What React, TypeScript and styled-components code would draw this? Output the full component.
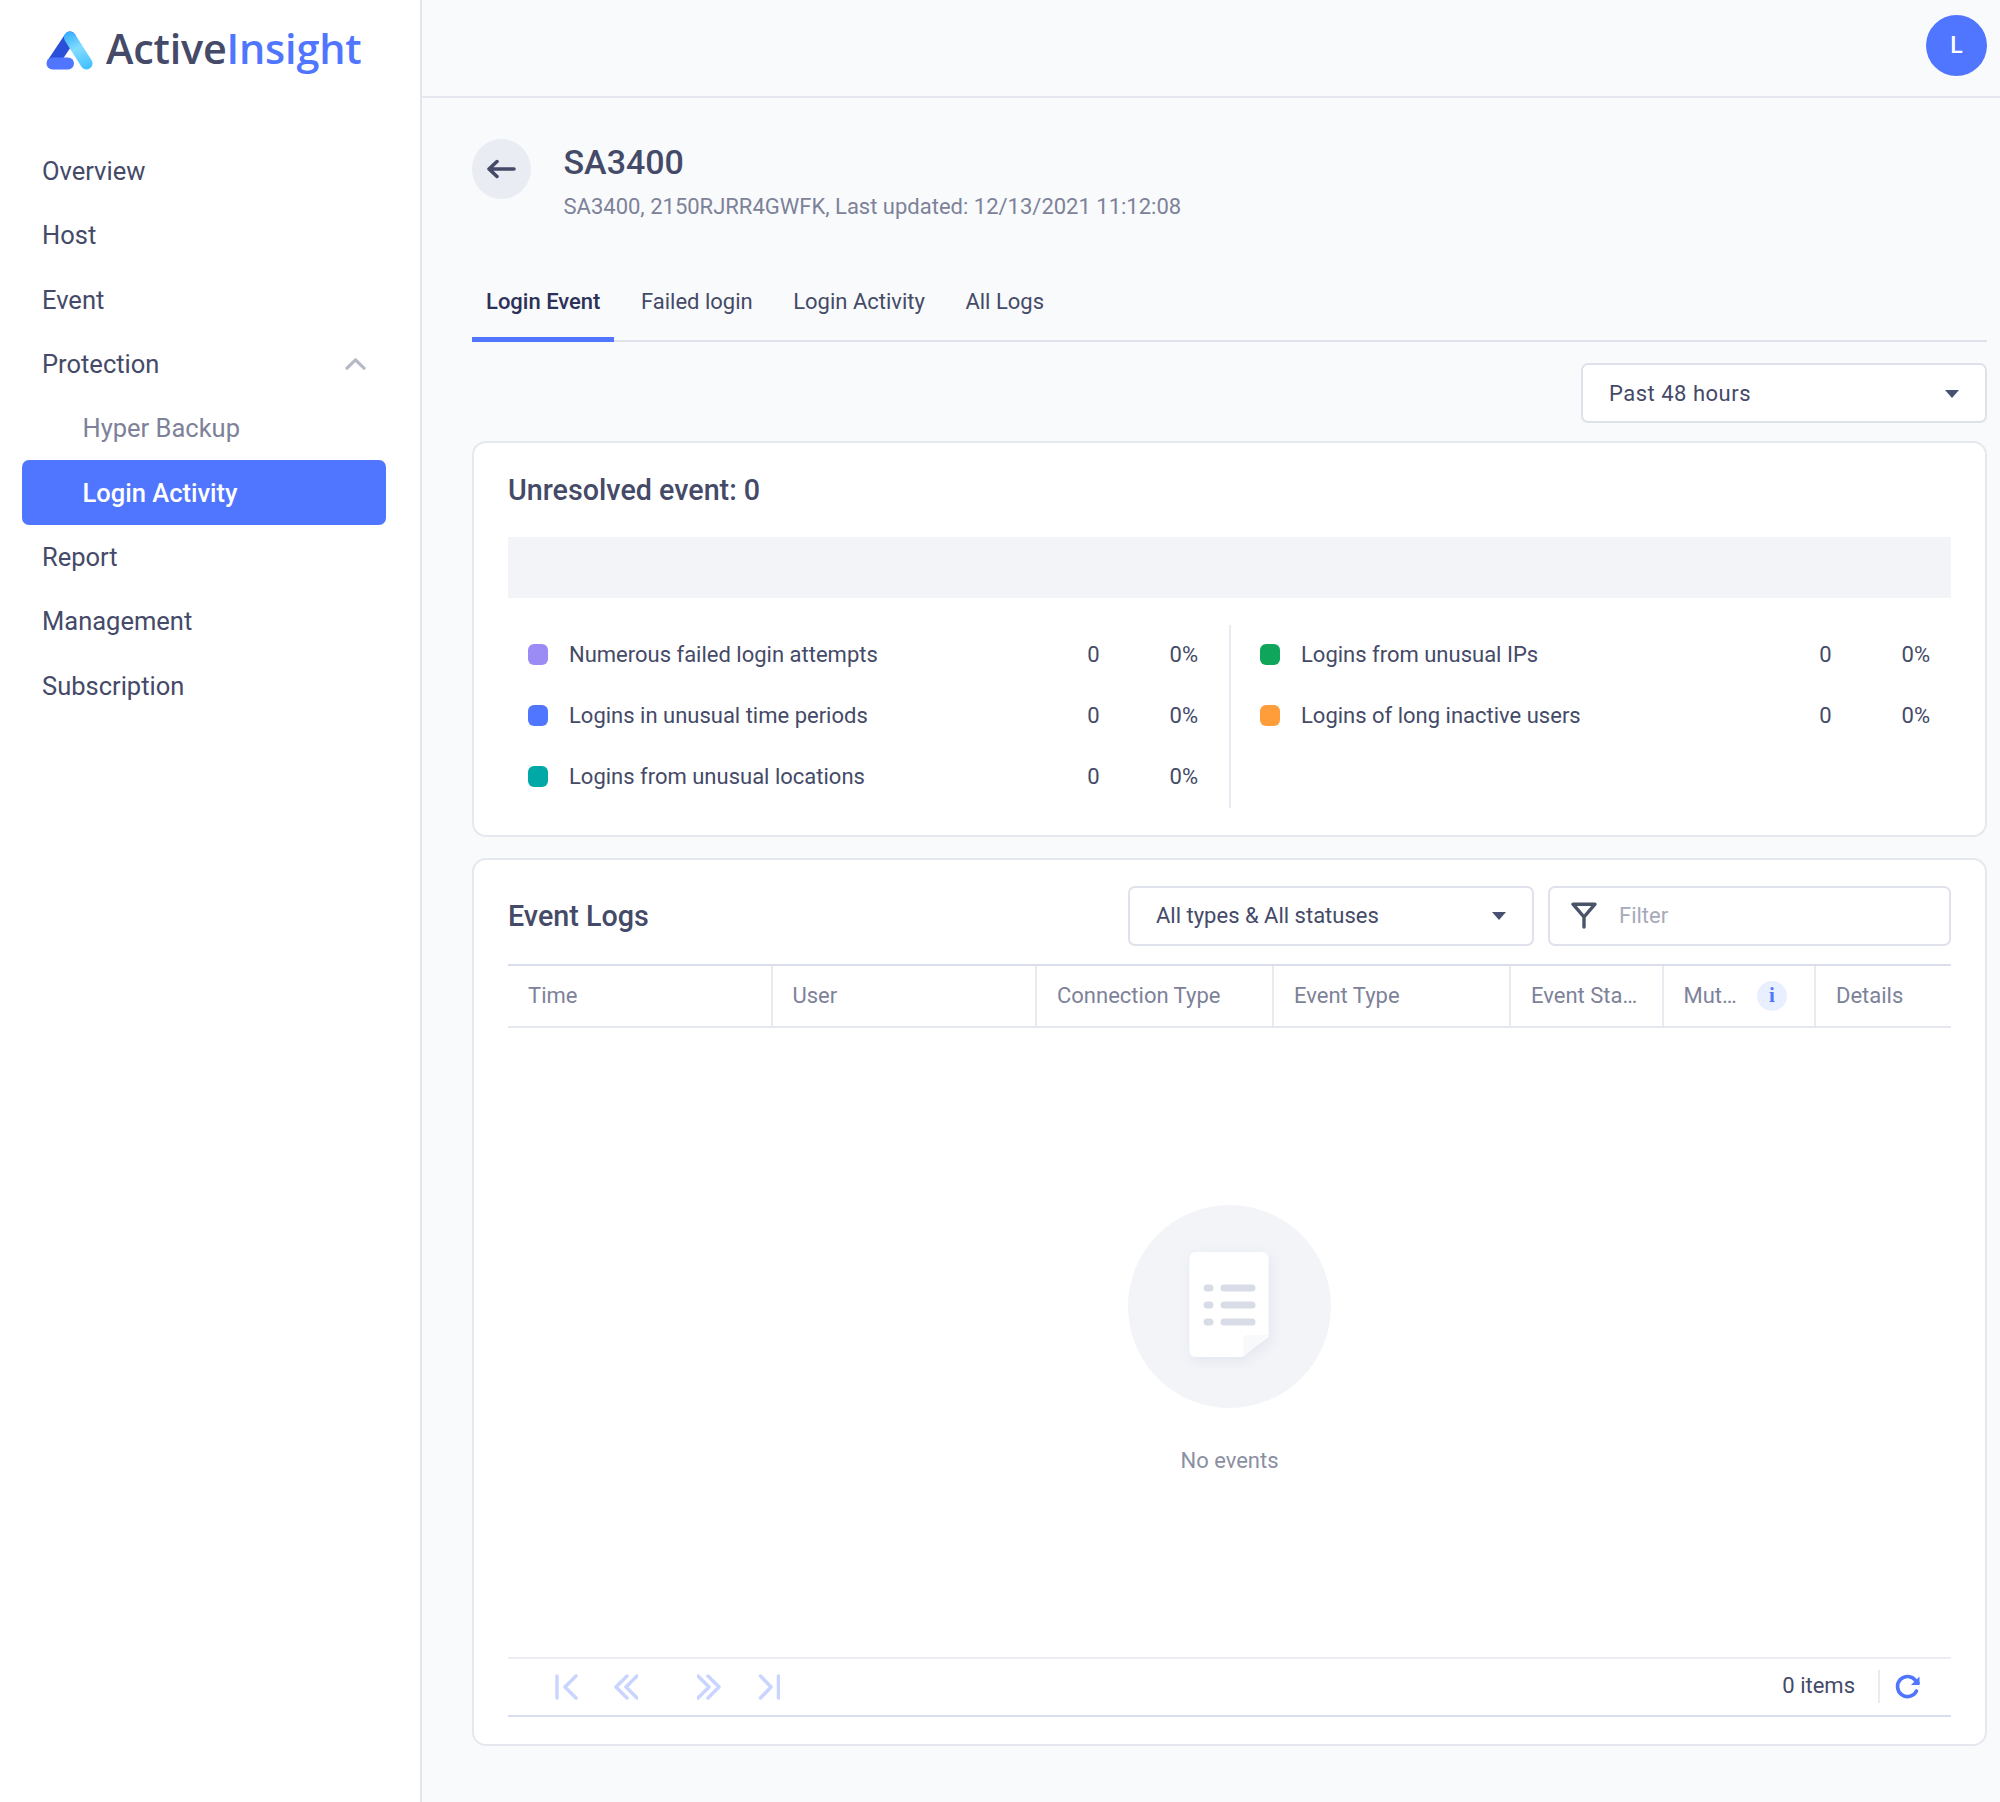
import React from "react";
import styled, { createGlobalStyle } from "styled-components";

const Global = createGlobalStyle`
  html, body { margin: 0; padding: 0; background: #f9fafc; }
  * { box-sizing: border-box; }
  body { font-family: Roboto, "Liberation Sans", sans-serif; color: #444a67; }
`;

const Page = styled.div`
  display: flex;
  width: 2000px;
  height: 1802px;
  background: #f9fafc;
`;
const Sidebar = styled.aside`
  width: 422px;
  flex: none;
  background: #fff;
  border-right: 2px solid #e2e5ee;
  padding: 0 34px 0 22px;
`;
const Brand = styled.div`
  height: 139px;
  padding: 28px 0 0 24px;
  display: flex;
  align-items: flex-start;
  gap: 12px;
`;
const BrandText = styled.div`
  font-family: "Open Sans", sans-serif;
  font-weight: 600;
  font-size: 41.4px;
  line-height: 40px;
  color: #444a67;
  letter-spacing: -0.2px;
  span { color: #5076ff; }
`;
const NavItem = styled.div<{ $level?: number; $active?: boolean }>`
  height: 64.3px;
  display: flex;
  align-items: center;
  justify-content: space-between;
  padding: 0 20px 0 ${(p) => (p.$level ? 60.5 : 20)}px;
  font-size: 25.5px;
  font-weight: ${(p) => (p.$active ? 500 : 400)};
  border-radius: 7px;
  color: ${(p) => (p.$active ? "#fff" : p.$level ? "#7d8299" : "#444a67")};
  background: ${(p) => (p.$active ? "#5076ff" : "transparent")};
`;
const Main = styled.main`
  flex: 1;
  min-width: 0;
`;
const TopBar = styled.header`
  height: 98px;
  border-bottom: 2px solid #e6e8ef;
  padding: 15px 13px 0 0;
  display: flex;
  justify-content: flex-end;
`;
const Avatar = styled.div`
  width: 61px;
  height: 61px;
  border-radius: 50%;
  background: #5076ff;
  color: #fff;
  font-size: 23px;
  font-weight: 500;
  display: flex;
  align-items: center;
  justify-content: center;
`;
const Content = styled.div`
  padding: 41px 13px 0 50px;
`;
const Head = styled.div`
  display: flex;
  gap: 32.5px;
  height: 93px;
`;
const BackButton = styled.div`
  width: 59px;
  height: 60px;
  border-radius: 50%;
  background: #e9ecf3;
  display: flex;
  align-items: center;
  justify-content: center;
  padding-right: 1px;
`;
const HeadText = styled.div`
  display: flex;
  flex-direction: column;
`;
const Title = styled.h1`
  margin: 0;
  font-size: 34px;
  font-weight: 500;
  line-height: 46px;
  color: #444a67;
`;
const Sub = styled.div`
  margin-top: 6.5px;
  font-size: 22px;
  line-height: 30px;
  color: #7d8299;
`;
const Tabs = styled.nav`
  margin-top: 42px;
  height: 67.5px;
  display: flex;
  gap: 12.5px;
  border-bottom: 2px solid #dfe2ea;
`;
const Tab = styled.div<{ $active?: boolean }>`
  height: 67.5px;
  padding: 0 14px ${(p) => (p.$active ? 7.5 : 12.5)}px;
  display: flex;
  align-items: center;
  font-size: 22px;
  font-weight: ${(p) => (p.$active ? 500 : 400)};
  color: ${(p) => (p.$active ? "#2c3157" : "#444a67")};
  border-bottom: ${(p) => (p.$active ? "5px solid #5076ff" : "none")};
`;
const RangeRow = styled.div`
  display: flex;
  justify-content: flex-end;
  margin-top: 21px;
`;
const Select = styled.div<{ $spaced?: boolean }>`
  width: 406px;
  height: 60px;
  flex: none;
  background: #fff;
  border: 2px solid #dfe2ea;
  border-radius: 7px;
  padding: ${(p) => (p.$spaced ? "2px 26px 0" : "0 26px")};
  display: flex;
  align-items: center;
  justify-content: space-between;
  font-size: 22px;
  letter-spacing: ${(p) => (p.$spaced ? "0.5px" : "0")};
  color: #444a67;
`;
const Caret = styled.span`
  width: 0;
  height: 0;
  border-left: 7px solid transparent;
  border-right: 7px solid transparent;
  border-top: 8px solid #4a5070;
`;
const Card = styled.section<{ $height: number; $top: number }>`
  margin-top: ${(p) => p.$top}px;
  height: ${(p) => p.$height}px;
  background: #fff;
  border: 2px solid #e6e8ef;
  border-radius: 14px;
  padding: 0 34px;
`;
const CardTitle = styled.h2`
  margin: 0;
  font-size: 28.7px;
  font-weight: 500;
  color: #444a67;
`;
const SummaryHead = styled.div`
  height: 94px;
  display: flex;
  align-items: center;
`;
const EmptyBar = styled.div`
  height: 61px;
  background: #f2f4f8;
`;
const Legend = styled.div`
  margin-top: 27px;
  height: 182px;
  display: grid;
  grid-template-columns: 721px 1fr;
`;
const LegendColumn = styled.div<{ $divider?: boolean }>`
  padding: 0 ${(p) => (p.$divider ? "21px 0 29px" : "31px 0 20px")};
  border-left: ${(p) => (p.$divider ? "2px solid #e9ebf1" : "none")};
`;
const LegendRow = styled.div`
  height: 61px;
  padding-bottom: 1px;
  display: grid;
  grid-template-columns: 20px 21px 1fr 60px 98.5px;
  align-items: center;
  font-size: 22px;
  color: #444a67;
`;
const Swatch = styled.span<{ $color: string }>`
  width: 20px;
  height: 21px;
  border-radius: 6px;
  background: ${(p) => p.$color};
`;
const LegendLabel = styled.span`
  grid-column: 3;
`;
const LegendNum = styled.span`
  text-align: right;
`;
const LogHead = styled.div`
  height: 104px;
  padding-top: 26px;
  display: flex;
  align-items: flex-start;
`;
const LogTitle = styled(CardTitle)`
  flex: 1;
  line-height: 60px;
`;
const FilterBox = styled.div`
  width: 403px;
  height: 60px;
  margin-left: 14px;
  background: #fff;
  border: 2px solid #dfe2ea;
  border-radius: 7px;
  padding-left: 21px;
  display: flex;
  align-items: center;
  gap: 22px;
  font-size: 22px;
  color: #a6aab9;
`;
const HeaderRow = styled.div`
  height: 64px;
  display: grid;
  grid-template-columns: 264.5px 264.5px 237px 237px 152.5px 152.5px 1fr;
  border-top: 2px solid #d9ddee;
  border-bottom: 2px solid #e6e8ef;
`;
const HeaderCell = styled.div<{ $last?: boolean; $badge?: boolean }>`
  padding: 0 ${(p) => (p.$badge ? 27 : 20)}px 0 20px;
  display: flex;
  align-items: center;
  justify-content: space-between;
  font-size: 22px;
  color: #7d8299;
  border-right: ${(p) => (p.$last ? "none" : "2px solid #e9ebf1")};
  white-space: nowrap;
`;
const InfoBadge = styled.span`
  width: 30px;
  height: 30px;
  border-radius: 50%;
  background: #e8efff;
  color: #5076ff;
  font-family: "Liberation Serif", serif;
  font-weight: 700;
  font-size: 21px;
  display: flex;
  align-items: center;
  justify-content: center;
`;
const EmptyArea = styled.div`
  height: 629px;
  padding-top: 177px;
  display: flex;
  flex-direction: column;
  align-items: center;
`;
const EmptyCircle = styled.div`
  width: 203px;
  height: 203px;
  border-radius: 50%;
  background: #f2f4f8;
  display: flex;
  align-items: center;
  justify-content: center;
`;
const EmptyText = styled.div`
  margin-top: 38px;
  font-size: 22px;
  line-height: 30px;
  color: #8b8fa3;
`;
const Pager = styled.div`
  height: 60px;
  border-top: 2px solid #eceef4;
  border-bottom: 2px solid #d9ddee;
  display: flex;
  align-items: center;
  padding: 0 30px 0 47px;
`;
const PagerIcons = styled.div`
  display: flex;
  align-items: center;
  gap: 35px;
  flex: 1;
`;
const PagerButton = styled.span<{ $gap?: number }>`
  display: flex;
  margin-left: ${(p) => p.$gap || 0}px;
`;
const Items = styled.div`
  font-size: 22px;
  color: #444a67;
  padding-right: 23px;
  border-right: 2px solid #e9ebf1;
  height: 33px;
  line-height: 31px;
  margin-right: 15px;
`;

const Logo = () => (
  <svg width="48" height="42" viewBox="0 0 48 42" fill="none" style={{ marginTop: 2 }}>
    <defs>
      <linearGradient id="arm" x1="24" y1="2" x2="41" y2="38" gradientUnits="userSpaceOnUse">
        <stop offset="0" stopColor="#38b0ff" />
        <stop offset="0.45" stopColor="#82dcff" />
        <stop offset="1" stopColor="#45c1ff" />
      </linearGradient>
    </defs>
    <path d="M24 7.5 L7 33" stroke="#2a4fd8" strokeWidth="12" strokeLinecap="round" />
    <path d="M24 7.5 L40.5 33.5" stroke="url(#arm)" strokeWidth="12" strokeLinecap="round" />
    <rect x="0.5" y="27.5" width="27.5" height="12" rx="6" fill="#5076ff" />
  </svg>
);
const Chevron = () => (
  <svg width="22" height="13" viewBox="0 0 22 13" fill="none">
    <path d="M3 10.2 L11.5 1.8 L20 10.2" stroke="#b6b9c6" strokeWidth="3.2" strokeLinecap="round" strokeLinejoin="round" />
  </svg>
);
const BackArrow = () => (
  <svg width="30" height="20" viewBox="0 0 30 20" fill="none">
    <path d="M11 2.5 L3 10 L11 17.5 M3 10 H28" stroke="#444a67" strokeWidth="3.5" strokeLinecap="round" strokeLinejoin="round" />
  </svg>
);
const Funnel = () => (
  <svg width="26" height="27" viewBox="0 0 26 27" fill="none">
    <path d="M2 2.2 H24 L13 15 Z M13 15 V25" stroke="#4a5468" strokeWidth="3.4" strokeLinecap="round" strokeLinejoin="round" />
  </svg>
);
const DocIcon = () => (
  <svg width="100" height="124" viewBox="0 0 100 124" fill="none">
    <defs>
      <filter id="doc" x="-30%" y="-30%" width="160%" height="160%">
        <feDropShadow dx="2" dy="4" stdDeviation="7" floodColor="#c5cadb" floodOpacity="0.35" />
      </filter>
    </defs>
    <g transform="translate(-4.5 3)">
      <path d="M14 11 a6 6 0 0 1 6 -6 H87 a6 6 0 0 1 6 6 V90 L66 110 H20 a6 6 0 0 1 -6 -6 Z" fill="#fff" filter="url(#doc)" />
      <path d="M68 110 V92 a4 4 0 0 1 4 -4 H93 Z" fill="#f8f9fb" />
      {[41, 58, 75].map((y) => (
        <g key={y} fill="#d8dce6">
          <rect x="28" y={y - 3.5} width="10" height="7" rx="3.5" />
          <rect x="45" y={y - 3.5} width="35" height="7" rx="3.5" />
        </g>
      ))}
    </g>
  </svg>
);
const PagerIcon = ({ d }: { d: string }) => (
  <svg width="24" height="26" viewBox="0 0 24 26" fill="none">
    <path d={d} stroke="#cad5ff" strokeWidth="3.5" strokeLinecap="round" strokeLinejoin="round" />
  </svg>
);
const Refresh = () => (
  <svg width="26" height="26" viewBox="0 0 26 26" fill="none">
    <path d="M21.5 17 A10 10 0 1 1 20.5 6.5 L23 9" stroke="#5076ff" strokeWidth="3.6" strokeLinecap="round" fill="none" />
    <path d="M24.5 2.5 V11 H16 Z" fill="#5076ff" />
  </svg>
);

const navTop = ["Overview", "Host", "Event"];
const navBottom = ["Report", "Management", "Subscription"];
const columns = ["Time", "User", "Connection Type", "Event Type", "Event Sta…"];
const leftLegend = [
  { color: "#9b8cf5", label: "Numerous failed login attempts" },
  { color: "#5076ff", label: "Logins in unusual time periods" },
  { color: "#00a9a5", label: "Logins from unusual locations" },
];
const rightLegend = [
  { color: "#0fa55a", label: "Logins from unusual IPs" },
  { color: "#ff9d3a", label: "Logins of long inactive users" },
];

const LegendRows = ({ rows }: { rows: { color: string; label: string }[] }) => (
  <>
    {rows.map((r) => (
      <LegendRow key={r.label}>
        <Swatch $color={r.color} />
        <LegendLabel>{r.label}</LegendLabel>
        <LegendNum>0</LegendNum>
        <LegendNum>0%</LegendNum>
      </LegendRow>
    ))}
  </>
);

export default function App() {
  return (
    <Page>
      <Global />
      <Sidebar>
        <Brand>
          <Logo />
          <BrandText>
            Active<span>Insight</span>
          </BrandText>
        </Brand>
        {navTop.map((n) => (
          <NavItem key={n}>{n}</NavItem>
        ))}
        <NavItem>
          Protection
          <Chevron />
        </NavItem>
        <NavItem $level={1}>Hyper Backup</NavItem>
        <NavItem $level={1} $active>
          Login Activity
        </NavItem>
        {navBottom.map((n) => (
          <NavItem key={n}>{n}</NavItem>
        ))}
      </Sidebar>
      <Main>
        <TopBar>
          <Avatar>L</Avatar>
        </TopBar>
        <Content>
          <Head>
            <BackButton>
              <BackArrow />
            </BackButton>
            <HeadText>
              <Title>SA3400</Title>
              <Sub>SA3400, 2150RJRR4GWFK, Last updated: 12/13/2021 11:12:08</Sub>
            </HeadText>
          </Head>
          <Tabs>
            <Tab $active>Login Event</Tab>
            <Tab>Failed login</Tab>
            <Tab>Login Activity</Tab>
            <Tab>All Logs</Tab>
          </Tabs>
          <RangeRow>
            <Select $spaced>
              Past 48 hours
              <Caret />
            </Select>
          </RangeRow>
          <Card $top={18} $height={396}>
            <SummaryHead>
              <CardTitle>Unresolved event: 0</CardTitle>
            </SummaryHead>
            <EmptyBar />
            <Legend>
              <LegendColumn>
                <LegendRows rows={leftLegend} />
              </LegendColumn>
              <LegendColumn $divider>
                <LegendRows rows={rightLegend} />
              </LegendColumn>
            </Legend>
          </Card>
          <Card $top={21} $height={888}>
            <LogHead>
              <LogTitle>Event Logs</LogTitle>
              <Select>
                All types &amp; All statuses
                <Caret />
              </Select>
              <FilterBox>
                <Funnel />
                Filter
              </FilterBox>
            </LogHead>
            <HeaderRow>
              {columns.map((c) => (
                <HeaderCell key={c}>{c}</HeaderCell>
              ))}
              <HeaderCell $badge>
                Mut…
                <InfoBadge>i</InfoBadge>
              </HeaderCell>
              <HeaderCell $last>Details</HeaderCell>
            </HeaderRow>
            <EmptyArea>
              <EmptyCircle>
                <DocIcon />
              </EmptyCircle>
              <EmptyText>No events</EmptyText>
            </EmptyArea>
            <Pager>
              <PagerIcons>
                <PagerButton>
                  <PagerIcon d="M2 2 V24 M21 2 L10 13 L21 24" />
                </PagerButton>
                <PagerButton>
                  <PagerIcon d="M13 2 L2 13 L13 24 M23 2 L12 13 L23 24" />
                </PagerButton>
                <PagerButton $gap={24}>
                  <PagerIcon d="M1 2 L12 13 L1 24 M11 2 L22 13 L11 24" />
                </PagerButton>
                <PagerButton>
                  <PagerIcon d="M4.5 2 L15 13 L4.5 24 M22.5 2 V24" />
                </PagerButton>
              </PagerIcons>
              <Items>0 items</Items>
              <Refresh />
            </Pager>
          </Card>
        </Content>
      </Main>
    </Page>
  );
}
